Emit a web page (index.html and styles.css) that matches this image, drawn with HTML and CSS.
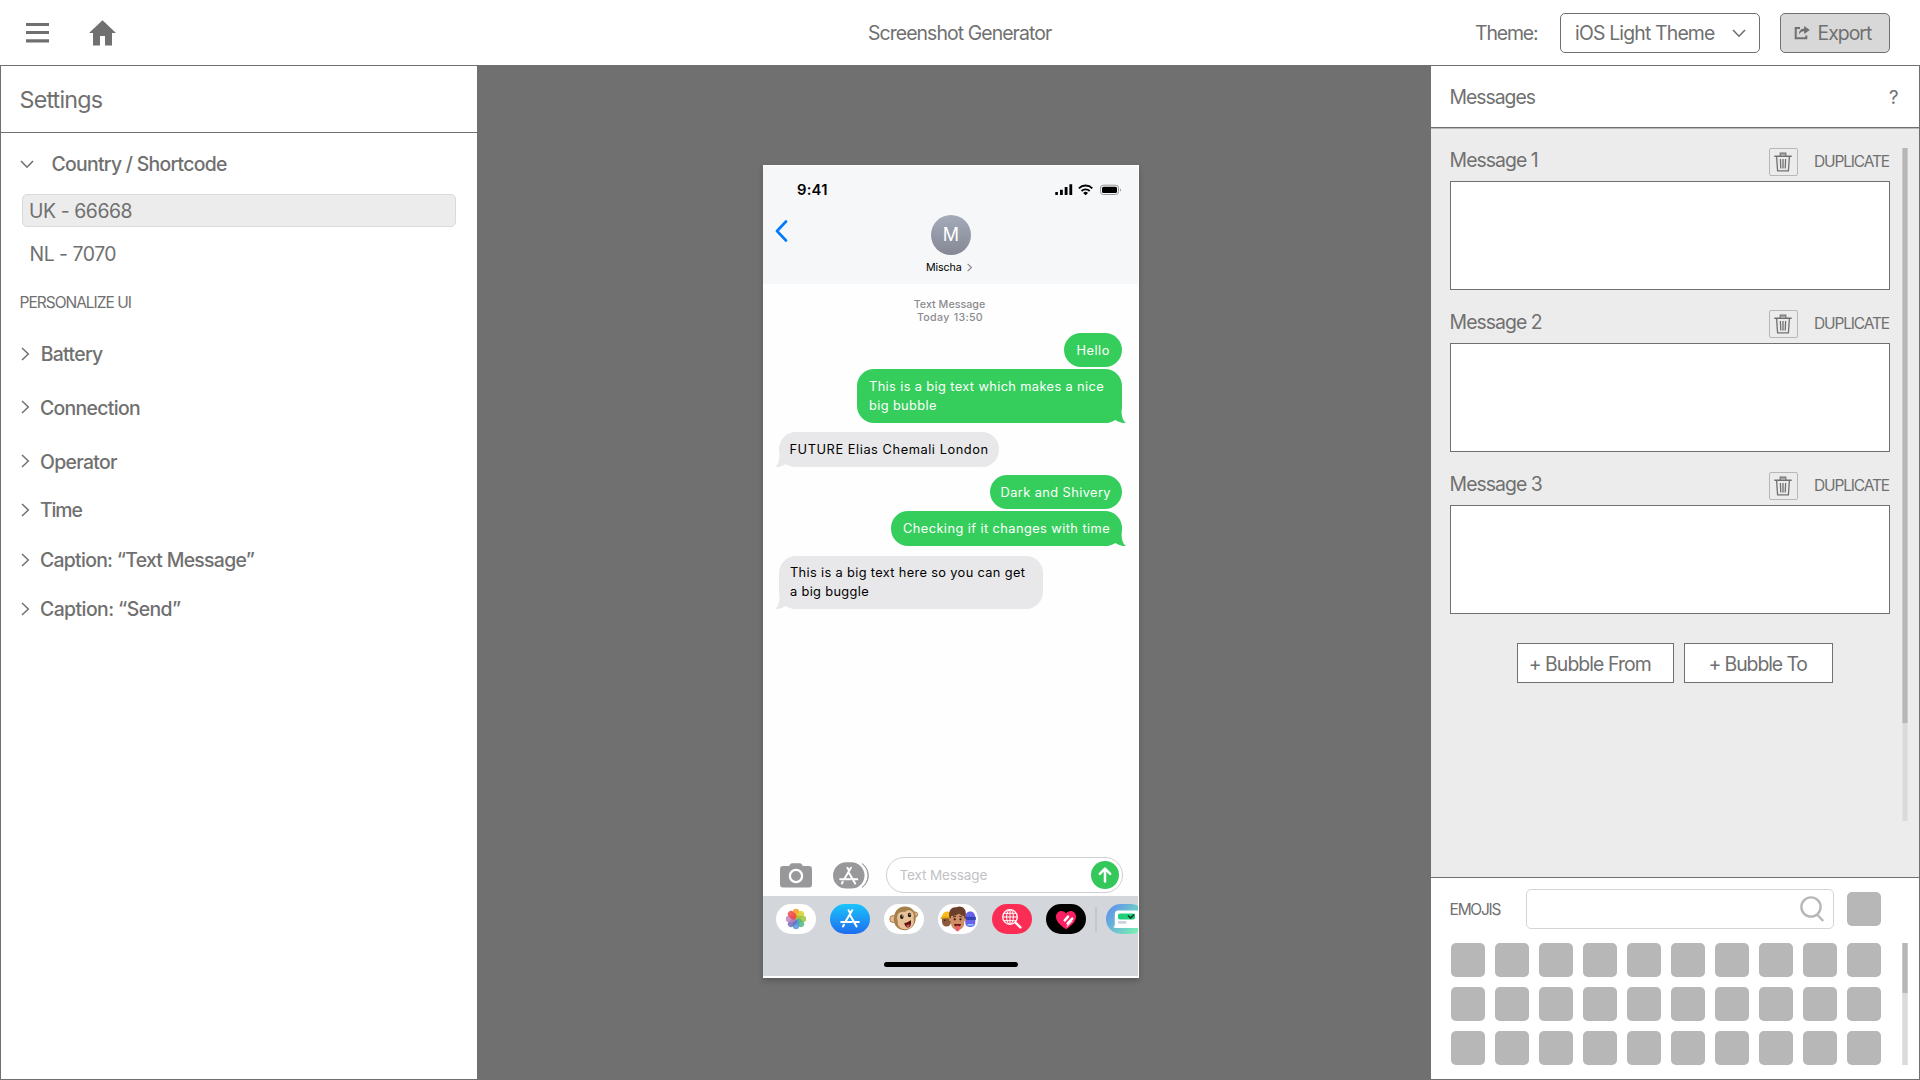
FILE: index.html
```html
<!DOCTYPE html>
<html lang="en">
<head>
<meta charset="utf-8">
<title>Screenshot Generator</title>
<link rel="stylesheet" href="styles.css">
</head>
<body>
<svg class="defs" aria-hidden="true">
  <symbol id="chev-r" viewBox="0 0 9 14"><path d="M1 1l6.3 6L1 13" fill="none" stroke="currentColor" stroke-width="1.5"/></symbol>
  <symbol id="chev-d" viewBox="0 0 14 9"><path d="M1 1l6 6.2L13 1" fill="none" stroke="currentColor" stroke-width="1.6"/></symbol>
  <symbol id="trash" viewBox="0 0 18 20"><path d="M.3 4.2h17.4M6.3 4V1.3h5.4V4" fill="none" stroke="#707070" stroke-width="1.4"/><path d="M6.5 1.5h5v2h-5z" fill="#a5a5a5"/><path d="M2.6 4.8l1 14h10.8l1-14M6.4 7l.4 9.5M9 7v9.5M11.6 7l-.4 9.5" fill="none" stroke="#707070" stroke-width="1.3"/></symbol>
  <symbol id="appstore" viewBox="0 0 20 19"><path d="M8.6 1.2l1.2 2.2M12.2 1.2L5.6 12.6M3.9 15.7l-1 1.8M1.2 13h10.6M10 6.1l6.6 11.4M14.8 13h4" fill="none" stroke="#fff" stroke-width="2" stroke-linecap="round"/></symbol>
</svg>

<header class="topbar">
  <div class="topbar-left">
    <svg class="menu" viewBox="0 0 23 20" fill="#707070"><path d="M0 0h23v3H0zM0 8.1h23v3H0zM0 16.3h23v3.2H0z"/></svg>
    <svg class="home" viewBox="0 0 27 26" fill="#707070"><path d="M13.5.2L27 13.1h-4V25.500h-7v-9.600h-5v9.600H4V13.100H0z"/></svg>
  </div>
  <h1 class="title">Screenshot Generator</h1>
  <div class="topbar-right">
    <span class="theme-label">Theme:</span>
    <button class="select"><span>iOS Light Theme</span><svg class="chev-down"><use href="#chev-d"/></svg></button>
    <button class="export">
      <svg viewBox="0 0 16 14"><path d="M6 2H1.700v10.300h10.600V9.500" fill="none" stroke="#707070" stroke-width="2"/><path d="M10.200 0L15.800 4l-5.600 4V5.300C7.800 5.200 6.400 6 5 8.600 5 5 6.800 2.700 10.200 2.600z" fill="#707070"/></svg>
      <span>Export</span>
    </button>
  </div>
</header>

<main class="workspace">
  <aside class="settings">
    <h2 class="settings-head">Settings</h2>
    <div class="group open"><svg class="chev-down"><use href="#chev-d"/></svg><span>Country / Shortcode</span></div>
    <div class="option selected">UK - 66668</div>
    <div class="option nl">NL - 7070</div>
    <div class="section-label">PERSONALIZE UI</div>
    <ul class="groups">
      <li class="first"><svg><use href="#chev-r"/></svg>Battery</li>
      <li><svg class="up"><use href="#chev-r"/></svg>Connection</li>
      <li><svg class="up"><use href="#chev-r"/></svg>Operator</li>
      <li class="time"><svg><use href="#chev-r"/></svg>Time</li>
      <li class="caption"><svg><use href="#chev-r"/></svg>Caption: “Text Message”</li>
      <li class="send"><svg><use href="#chev-r"/></svg>Caption: “Send”</li>
    </ul>
  </aside>

  <section class="stage">
    <div class="phone">
      <div class="phone-head">
        <div class="status">
          <span class="clock">9:41</span>
          <svg class="status-icons" viewBox="0 0 67 12">
            <path d="M.3 8h2.600v3H.3zM5 5.800h2.800V11H5zM9.700 3h2.800v8H9.700zM14.400.2h2.800V11h-2.800z"/>
            <path d="M23.900 4.300a9.500 9.500 0 0 1 13.400 0M26.500 7a6 6 0 0 1 8.200 0" fill="none" stroke="#000" stroke-width="1.900"/>
            <path d="M28.200 8.900a3.600 3.600 0 0 1 4.800 0L30.600 11.200z"/>
            <rect x="45.500" y="1.200" width="18" height="9.300" rx="2.800" fill="none" stroke="#999" stroke-width="1"/>
            <rect x="47" y="2.700" width="15" height="6.400" rx="1.500"/>
            <path d="M65 4.200v3.400c1.300-.6 1.300-2.800 0-3.400z" fill="#999"/>
          </svg>
        </div>
        <div class="contact">
          <svg class="back" viewBox="0 0 13 22"><path d="M11 1.500L2 11l9 9.500" fill="none" stroke="#007aff" stroke-width="2.600" stroke-linecap="round" stroke-linejoin="round"/></svg>
          <div class="who">
            <div class="avatar">M</div>
            <div class="name">Mischa<svg viewBox="0 0 9 14"><path d="M1 1l6.300 6L1 13" fill="none" stroke="#85858a" stroke-width="1.900"/></svg></div>
          </div>
        </div>
      </div>

      <div class="chat">
        <div class="stamp"><div class="stamp-kind">Text Message</div><div class="stamp-time">Today 13:50</div></div>
        <div class="bubble out hello">Hello</div>
        <div class="bubble out big">This is a big text which makes a nice<br>big bubble<svg class="tail-r" viewBox="0 0 22 20"><path d="M17.500 0C17.500 10 17 15.500 22 20c-4 .2-7.500-.8-10.500-3C8 19 4 20 0 20V0z"/></svg></div>
        <div class="bubble in future">FUTURE Elias Chemali London<svg class="tail-l" viewBox="0 0 22 20"><path d="M4.500 0C4.500 10 5 15.500 0 20c4 .2 7.500-.8 10.500-3C14 19 18 20 22 20V0z"/></svg></div>
        <div class="bubble out dark">Dark and Shivery</div>
        <div class="bubble out check">Checking if it changes with time<svg class="tail-r" viewBox="0 0 22 20"><path d="M17.500 0C17.500 10 17 15.500 22 20c-4 .2-7.500-.8-10.500-3C8 19 4 20 0 20V0z"/></svg></div>
        <div class="bubble in buggle">This is a big text here so you can get<br>a big buggle<svg class="tail-l" viewBox="0 0 22 20"><path d="M4.500 0C4.500 10 5 15.500 0 20c4 .2 7.500-.8 10.500-3C14 19 18 20 22 20V0z"/></svg></div>
      </div>

      <div class="compose">
        <svg class="camera" viewBox="0 0 32 25"><path d="M3 3h6l1.800-2.200Q11.300.2 12 .2h8q.7 0 1.200.6L23 3h6q3 0 3 3v15.500q0 3-3 3H3q-3 0-3-3V6q0-3 3-3z" fill="#98989b"/><circle cx="16" cy="13" r="6.100" fill="none" stroke="#fff" stroke-width="2.300"/></svg>
        <svg class="apps" viewBox="0 0 36 27"><path d="M29 1.500a14.500 14.500 0 0 1 0 24 16 16 0 0 0 6-12 16 16 0 0 0-6-12z" fill="#98989b" stroke="#98989b" stroke-width=".8"/><rect x="-.5" y="0" width="33" height="27" rx="13.500" fill="#fff"/><rect x="0" y=".3" width="31.500" height="26.200" rx="13.100" fill="#98989b"/><use href="#appstore" x="6" y="4.500" width="19.500" height="18.500"/></svg>
        <div class="input"><span>Text Message</span>
          <svg viewBox="0 0 28 28"><circle cx="14" cy="14" r="14" fill="#34c759"/><path d="M14 20.500V8M8.800 12.800L14 7.600l5.200 5.200" fill="none" stroke="#fff" stroke-width="2.500" stroke-linecap="round" stroke-linejoin="round"/></svg>
        </div>
      </div>

      <div class="tray">
        <div class="pills">
          <svg class="pill" viewBox="0 0 40 30"><rect width="40" height="30" rx="15" fill="#fff"/>
            <g transform="translate(20 15)" fill-opacity=".85">
              <rect x="-3.200" y="-10.200" width="6.400" height="9.700" rx="3.200" fill="#fb9a1d"/>
              <rect x="-3.200" y="-10.200" width="6.400" height="9.700" rx="3.200" fill="#d9cf2e" transform="rotate(45)"/>
              <rect x="-3.200" y="-10.200" width="6.400" height="9.700" rx="3.200" fill="#9cc63d" transform="rotate(90)"/>
              <rect x="-3.200" y="-10.200" width="6.400" height="9.700" rx="3.200" fill="#4fb783" transform="rotate(135)"/>
              <rect x="-3.200" y="-10.200" width="6.400" height="9.700" rx="3.200" fill="#4f95d8" transform="rotate(180)"/>
              <rect x="-3.200" y="-10.200" width="6.400" height="9.700" rx="3.200" fill="#6e6bbd" transform="rotate(225)"/>
              <rect x="-3.200" y="-10.200" width="6.400" height="9.700" rx="3.200" fill="#c183bd" transform="rotate(270)"/>
              <rect x="-3.200" y="-10.200" width="6.400" height="9.700" rx="3.200" fill="#ee4545" transform="rotate(315)"/>
            </g></svg>
          <svg class="pill" viewBox="0 0 40 30"><defs><linearGradient id="store" x2="0" y2="1"><stop stop-color="#1ac4fb"/><stop offset="1" stop-color="#1f6cf0"/></linearGradient></defs><rect width="40" height="30" rx="15" fill="url(#store)"/><use href="#appstore" x="10" y="5" width="20" height="19"/></svg>
          <svg class="pill" viewBox="0 0 40 30"><rect width="40" height="30" rx="15" fill="#fff"/>
            <circle cx="9.300" cy="15" r="3.500" fill="#eab892" stroke="#a57a45"/><circle cx="31" cy="10.500" r="2.600" fill="#eab892" stroke="#a57a45"/>
            <path d="M20 2.500c7-.5 11.500 4 11.800 10.500.3 7-4.300 13.200-11 13.200-6.500 0-10.800-4.200-11-10.700C9.600 8.500 13.500 3 20 2.500z" fill="#a4814c"/>
            <path d="M21 8c3-3.300 8.500-1.500 8.800 3 .2 2-.5 3 0 5 .8 5.500-3.500 9.500-8.500 9.200-5 0-8-3.200-7.500-8-1.500-4-.5-8 2.500-9 2-.6 3.500-.8 4.700-.2z" fill="#e8c196"/>
            <ellipse cx="17.800" cy="12.700" rx="1.700" ry="2.200" fill="#1d1714"/><ellipse cx="25.500" cy="11" rx="1.700" ry="2.200" fill="#1d1714"/><circle cx="18.300" cy="11.900" r=".6" fill="#fff"/><circle cx="26" cy="10.200" r=".6" fill="#fff"/>
            <path d="M20.300 19c2.500-.3 4.500-1.300 6.500-3 .8 4-.3 7.200-2.600 7.500-2 .2-3.500-1.700-3.900-4.500z" fill="#5a1411"/><path d="M22 21.800c1.200-1.300 2.500-1.600 3.800-1.200-.6 2.700-2.600 3.600-3.800 1.200z" fill="#d9505c"/></svg>
          <svg class="pill" viewBox="0 0 40 30"><rect width="40" height="30" rx="15" fill="#fff"/>
            <path d="M3.500 14.500c.2-4.300 2.500-7 6-7s4.500 3 4.500 7z" fill="#f9bd1b"/><path d="M4 13h9v4.500c0 3-1.800 5-4.500 5S4 20.500 4 17.500z" fill="#8b5a3c"/><path d="M2.600 13.400q5-2 11 .2v1.400q-5-1.500-11 0z" fill="#e9a312"/><circle cx="6.800" cy="16.300" r=".7" fill="#2a1710"/>
            <path d="M27 14c0-4 2-6.500 5.300-6.500 3.200 0 5 2.500 5 6.500v4.500c0 3-2 4.500-5 4.500s-5-1.500-5-4.500z" fill="#6662ec"/><path d="M26.500 12.800h11.300v3.200H26.500z" fill="#3542b4"/><path d="M29.500 20h6v1.500h-6z" fill="#8ad0ff"/>
            <path d="M11.500 14C10 7 13 2.500 18.500 3.200c5-2 10 1.300 9.300 7.300-.1 2-.3 3-.8 4z" fill="#6b3e2b"/><path d="M13 12c3 .2 6-.8 8-2.500 1.500 1.500 3 2.200 5.200 2.500v7c0 4.300-3 7-6.700 7S13 23 13 19z" fill="#cf8f66"/><circle cx="12.500" cy="16" r="1.400" fill="#cf8f66"/><circle cx="26.700" cy="16" r="1.400" fill="#cf8f66"/>
            <circle cx="16.700" cy="15.300" r="1.100" fill="#2a1710"/><circle cx="22.500" cy="15.300" r="1.100" fill="#2a1710"/><path d="M15 12.900l3-.5M21.200 12.400l3 .5" stroke="#54301f" stroke-width="1"/><path d="M16 20h7c0 2-1.500 3-3.500 3S16 22 16 20z" fill="#6b1713"/><path d="M17.500 22q2-1 4 0v3.300c0 2.700-4 2.700-4 0z" fill="#ef5d6c"/></svg>
          <svg class="pill" viewBox="0 0 40 30"><rect width="40" height="30" rx="15" fill="#fb2d55"/><g fill="none" stroke="#fff"><circle cx="18" cy="13" r="7.300" stroke-width="1.300"/><ellipse cx="18" cy="13" rx="3.400" ry="7.300" stroke-width="1"/><path d="M18 5.700v14.600M10.700 13h14.600M11.800 9.300h12.400M11.800 16.700h12.400" stroke-width="1"/><path d="M23.600 18.600l4.800 4.800" stroke-width="2.400" stroke-linecap="round"/></g></svg>
          <svg class="pill" viewBox="0 0 40 30"><rect width="40" height="30" rx="15" fill="#000"/><path d="M20 25.300C13.500 21 10 17 10 12.800 10 9.500 12.300 7 15.300 7c2 0 3.700 1 4.700 2.800C21 8 22.800 7 24.800 7c3 0 5.200 2.500 5.200 5.800 0 4.200-3.500 8.200-10 12.500z" fill="#fa1e62"/><path d="M18.800 16.300l3.200-3.600M21.600 19.600l4.600-5" stroke="#fff" stroke-width="2.600" stroke-linecap="round"/><path d="M20.600 23l5.700-6" stroke="#fff" stroke-width="1"/></svg>
          <span class="sep"></span>
          <svg class="pill last" viewBox="0 0 40 30"><defs><linearGradient id="poll" x2="1" y2=".6"><stop stop-color="#5c86f2"/><stop offset="1" stop-color="#79f2b2"/></linearGradient></defs><rect width="40" height="30" rx="15" fill="url(#poll)"/><path d="M12 6.500h18q4 0 4 4V20q0 4-4 4H11q-2.500 0-4-.8 2-.8 1.800-3.200v-9.500q0-4 3.200-4z" fill="#fff"/><rect x="12" y="9.500" width="17" height="6" rx="1.800" fill="#1fd07a"/><path d="M22 11.500l2.600 2.500 3.600-3.500" fill="none" stroke="#0d3b29" stroke-width="1.700"/><rect x="12" y="17" width="8.500" height="2.800" rx="1.200" fill="#cdd3dc"/></svg>
        </div>
        <div class="home-bar"></div>
      </div>
    </div>
  </section>

  <aside class="side">
    <div class="side-head"><h2>Messages</h2><span class="help">?</span></div>
    <div class="messages">
      <div class="message-list">
        <div class="message">
          <div class="message-head"><span class="message-name">Message 1</span><button class="trash"><svg><use href="#trash"/></svg></button><span class="dup">DUPLICATE</span></div>
          <div class="field"></div>
        </div>
        <div class="message">
          <div class="message-head"><span class="message-name">Message 2</span><button class="trash"><svg><use href="#trash"/></svg></button><span class="dup">DUPLICATE</span></div>
          <div class="field"></div>
        </div>
        <div class="message">
          <div class="message-head"><span class="message-name">Message 3</span><button class="trash"><svg><use href="#trash"/></svg></button><span class="dup">DUPLICATE</span></div>
          <div class="field"></div>
        </div>
        <div class="adders"><button class="from">+ Bubble From</button><button class="to">+ Bubble To</button></div>
      </div>
      <div class="scroll"><div class="thumb"></div></div>
    </div>
    <div class="emojis">
      <div class="emoji-bar">
        <span class="emoji-label">EMOJIS</span>
        <div class="search"><svg viewBox="0 0 25 26" fill="none" stroke="#b7b7b7" stroke-width="2.400"><circle cx="11" cy="11" r="9.600"/><path d="M16.800 18.200l6.400 6.800"/></svg></div>
        <i class="cell"></i>
      </div>
      <div class="emoji-body">
        <div class="grid">
          <i class="cell"></i><i class="cell"></i><i class="cell"></i><i class="cell"></i><i class="cell"></i><i class="cell"></i><i class="cell"></i><i class="cell"></i><i class="cell"></i><i class="cell"></i>
          <i class="cell"></i><i class="cell"></i><i class="cell"></i><i class="cell"></i><i class="cell"></i><i class="cell"></i><i class="cell"></i><i class="cell"></i><i class="cell"></i><i class="cell"></i>
          <i class="cell"></i><i class="cell"></i><i class="cell"></i><i class="cell"></i><i class="cell"></i><i class="cell"></i><i class="cell"></i><i class="cell"></i><i class="cell"></i><i class="cell"></i>
        </div>
        <div class="scroll small"><div class="thumb"></div></div>
      </div>
    </div>
  </aside>
</main>
</body>
</html>
```
FILE: styles.css
```css
* { box-sizing: border-box; }
body {
  margin: 0;
  width: 1920px;
  height: 1080px;
  overflow: hidden;
  display: flex;
  flex-direction: column;
  background: #fff;
  color: #707070;
  font: 400 19.4px/24px Inter, "Liberation Sans", sans-serif;
  letter-spacing: -.9px;
}
h1, h2 { margin: 0; font: inherit; }
ul { list-style: none; margin: 0; padding: 0; }
button { font: inherit; letter-spacing: inherit; color: inherit; padding: 0; background: #fff; border: 1px solid #707070; white-space: nowrap; }
svg { display: block; flex: none; }
.defs { display: none; }

/* Top bar */
.topbar { height: 65px; flex: none; display: grid; grid-template-columns: 868px 1fr auto; align-items: center; padding: 1px 30px 0 0; }
.topbar-left { display: flex; align-items: center; gap: 40px; padding-left: 26px; }
.menu { width: 23px; height: 20px; }
.home { width: 27px; height: 26px; }
.title { letter-spacing: -.91px; }
.topbar-right { display: flex; align-items: center; }
.theme-label { width: 85px; letter-spacing: -1.1px; }
.select, .export { height: 40px; border-radius: 5px; display: flex; align-items: center; }
.select { width: 200px; padding: 0 13px 0 14px; justify-content: space-between; letter-spacing: -.82px; }
.chev-down { width: 14px; height: 9px; }
.export { width: 110px; margin-left: 20px; padding-left: 13px; gap: 7.5px; background: #d8d8d8; letter-spacing: -.98px; }
.export svg { width: 16px; height: 14px; }

/* Three columns */
.workspace { flex: 1; display: grid; grid-template-columns: 477px 1fr 489px; background: #707070; border-top: 1px solid #707070; }
.settings { background: #fff; border: solid #707070; border-width: 0 0 1px 1px; }
.settings-head { height: 67px; padding: 22px 0 0 18.5px; border-bottom: 1px solid #707070; font-size: 23.3px; letter-spacing: -.82px; }
.group { font-weight: 500; letter-spacing: -.71px; display: flex; align-items: center; }
.open { margin-top: 19px; padding-left: 18.5px; gap: 18px; }
.option { letter-spacing: -.47px; }
.selected { width: 434px; height: 33px; margin: 18px 0 0 21px; padding: 4px 0 0 6px; border: 1px solid #dadada; border-radius: 5px; background: #ececec; letter-spacing: -.42px; }
.nl { margin: 15px 0 0 28.5px; }
.section-label { margin: 25px 0 0 18.5px; font-size: 15.5px; letter-spacing: -1px; }
.groups { margin: 27px 0 0 20px; font-weight: 500; letter-spacing: -.67px; }
.groups li { height: 24px; margin-top: 30px; display: flex; align-items: center; gap: 10px; }
.groups li.first { margin-top: 0; gap: 10.7px; }
.groups li.time { margin-top: 24px; letter-spacing: -1.1px; }
.groups li.caption { margin-top: 26px; letter-spacing: -.71px; }
.groups li.send { margin-top: 25px; letter-spacing: -.56px; }
.groups svg { width: 9px; height: 14px; }
.groups .up { margin-bottom: 2px; }

/* Phone */
.stage { padding: 99px 0 0 286px; }
.phone { width: 376px; height: 813px; background: #fefefe; border: solid #fff; border-width: 1px 1px 2px 0; box-shadow: 0 3px 6px rgba(0,0,0,.2); color: #000; display: flex; flex-direction: column; overflow: hidden; }
.phone-head { height: 118px; background: #f6f7f9; flex: none; }
.status { display: flex; justify-content: space-between; padding: 12px 16px 0 34px; }
.clock { font-size: 14.8px; font-weight: 600; line-height: 24px; letter-spacing: .2px; }
.status-icons { width: 67px; height: 12px; margin-top: 6px; }
.contact { display: grid; grid-template-columns: 1fr auto 1fr; padding: 13px 12px 0; }
.back { width: 13px; height: 22px; margin-top: 5px; }
.who { display: flex; flex-direction: column; align-items: center; padding-left: 1px; }
.avatar { width: 40px; height: 40px; border-radius: 50%; background: linear-gradient(#a4abb9, #858794); color: #fff; font-size: 18px; line-height: 40px; text-align: center; letter-spacing: 0; }
.name { display: flex; align-items: center; gap: 5px; margin: 4px 4px 0 0; font-size: 10.7px; line-height: 17px; letter-spacing: -.1px; }
.name svg { width: 5.5px; height: 9px; }
.chat { flex: 1; display: flex; flex-direction: column; padding: 14px 16px 0; letter-spacing: .42px; font-size: 12.8px; line-height: 19px; }
.stamp { text-align: center; color: #8b8b8f; font-size: 10.7px; line-height: 13px; font-weight: 500; height: 35px; flex: none; padding-right: 2px; }
.stamp-kind { letter-spacing: .03px; }
.stamp-time { letter-spacing: .28px; word-spacing: 1px; padding-left: 1px; }
.bubble { position: relative; isolation: isolate; flex: none; border-radius: 17px; padding: 8px 12px 7px; white-space: nowrap; }
.out { align-self: flex-end; background: #35ce5c; color: #fff; }
.in { background: #e8e8ea; }
.hello { width: 58px; height: 34px; padding-left: 12.5px; letter-spacing: .5px; }
.big { width: 265px; height: 54px; margin-top: 2px; letter-spacing: .38px; }
.future { width: 220px; height: 35px; margin-top: 9px; padding: 8px 10.5px; letter-spacing: .56px; }
.dark { width: 132px; height: 34px; margin-top: 8px; padding: 8px 10.5px; letter-spacing: .42px; }
.check { width: 231px; height: 35px; margin-top: 2px; letter-spacing: .43px; }
.buggle { width: 264px; height: 53px; margin-top: 10px; padding: 7px 11px; letter-spacing: .35px; }
.tail-r, .tail-l { position: absolute; z-index: -1; bottom: 0; width: 22px; height: 20px; }
.tail-r { right: -4px; fill: #35ce5c; }
.tail-l { left: -4px; fill: #e8e8ea; }
.compose { height: 39px; display: flex; align-items: flex-start; padding-left: 17px; flex: none; }
.camera { width: 32px; height: 25px; margin-top: 6px; }
.apps { width: 36px; height: 27px; margin: 5px 0 0 21px; }
.input { width: 237px; height: 36px; margin-left: 17px; padding: 0 3px 0 12.5px; border: 1px solid #cfcfd2; border-radius: 18px; display: flex; align-items: center; justify-content: space-between; font-size: 13.5px; letter-spacing: -.12px; color: #c2c2c5; background: #fff; }
.input svg { width: 28px; height: 28px; }
.tray { height: 80px; flex: none; background: #d3d7dc; padding-top: 8px; }
.pills { display: flex; align-items: center; gap: 14.1px; padding-left: 13px; }
.pill { width: 40px; height: 30px; }
.sep { width: 2px; height: 25px; margin: 0 -5.5px; background: #c3c7cc; flex: none; }
.home-bar { width: 134px; height: 5px; margin: 28px 0 0 121px; border-radius: 3px; background: #000; }

/* Messages */
.side { background: #ececec; display: flex; flex-direction: column; border: solid #707070; border-width: 0 1px 1px 0; }
.side-head { height: 62px; flex: none; background: #fff; border-bottom: 1px solid #707070; box-shadow: 0 1px #b9b9b9; display: flex; justify-content: space-between; align-items: center; padding: 0 20.5px 0 18.6px; }
.side-head h2 { letter-spacing: -1.03px; }
.help { letter-spacing: 0; font-size: 18.6px; }
.messages { flex: 1; display: flex; justify-content: space-between; padding: 20px 11px 0 19px; }
.message-list { width: 440px; }
.message { height: 162px; }
.message-head { height: 28px; display: flex; align-items: center; }
.message-name { flex: 1; margin: -4px 0 0 -.4px; letter-spacing: -.95px; }
.trash { width: 29px; height: 28px; border: 1px solid #b7b7b7; border-radius: 2px; background: none; padding: 0 0 1px 4px; }
.trash svg { width: 18px; height: 20px; }
.dup { width: 76px; margin-left: 16px; font-size: 15.5px; letter-spacing: -1.15px; }
.field { height: 109px; margin-top: 5px; background: #fff; border: 1px solid #707070; }
.adders { display: flex; gap: 10px; margin: 9px 0 0 67px; }
.adders button { height: 40px; text-align: left; padding-top: 2px; }
.adders .from { width: 157px; padding-left: 10.7px; letter-spacing: -.93px; }
.adders .to { width: 149px; padding-left: 23.5px; letter-spacing: -1.08px; }
.scroll { width: 6px; height: 673px; background: linear-gradient(90deg, #e3e3e3 1px, #dadada 1px 5px, #e3e3e3 5px); }
.thumb { height: 575px; background: linear-gradient(90deg, #c9c9c9 1px, #b7b7b7 1px 5px, #c9c9c9 5px); }

/* Emojis */
.emojis { height: 202px; flex: none; background: #fff; border-top: 1px solid #707070; padding: 11px 11px 0 20px; }
.emoji-bar { display: flex; align-items: center; height: 40px; }
.emoji-label { width: 75px; margin-left: -1.4px; padding-top: 2px; font-size: 15.5px; letter-spacing: -1.28px; }
.search { width: 308px; height: 40px; margin: 0 13px 0 1.4px; border: 1px solid #d5d5d5; border-radius: 5px; display: flex; justify-content: flex-end; align-items: center; padding-right: 8px; }
.search svg { width: 25px; height: 26px; }
.cell { width: 34px; height: 34px; border-radius: 5px; background: #b7b7b7; }
.emoji-body { display: flex; justify-content: space-between; margin-top: 14px; }
.grid { display: grid; grid-template-columns: repeat(10, 34px); gap: 10px; }
.small { height: 122px; }
.small .thumb { height: 50px; }
```
